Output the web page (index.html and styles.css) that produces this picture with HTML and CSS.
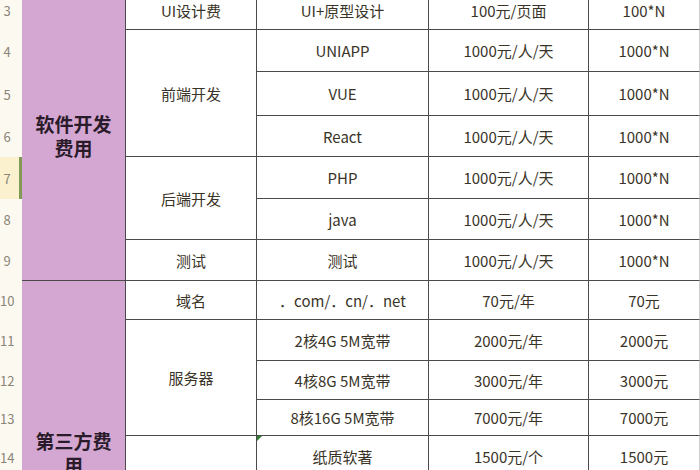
FILE: index.html
```html
<!DOCTYPE html>
<html lang="zh-CN">
<head>
<meta charset="utf-8">
<title>费用表</title>
<link rel="stylesheet" href="styles.css">
</head>
<body>
<div class="sheet">
  <!-- row 3 -->
  <div class="rh"><span>3</span></div>
  <div class="cat span7">软件开发<br>费用</div>
  <div class="cell c2">UI设计费</div>
  <div class="cell c3">UI+原型设计</div>
  <div class="cell c4">100元/页面</div>
  <div class="cell c5">100*N</div>
  <!-- row 4 -->
  <div class="rh"><span>4</span></div>
  <div class="cell c2 span3">前端开发</div>
  <div class="cell c3">UNIAPP</div>
  <div class="cell c4">1000元/人/天</div>
  <div class="cell c5">1000*N</div>
  <!-- row 5 -->
  <div class="rh"><span>5</span></div>
  <div class="cell c3">VUE</div>
  <div class="cell c4">1000元/人/天</div>
  <div class="cell c5">1000*N</div>
  <!-- row 6 -->
  <div class="rh"><span>6</span></div>
  <div class="cell c3">React</div>
  <div class="cell c4">1000元/人/天</div>
  <div class="cell c5">1000*N</div>
  <!-- row 7 -->
  <div class="rh sel"><span>7</span></div>
  <div class="cell c2 span2">后端开发</div>
  <div class="cell c3">PHP</div>
  <div class="cell c4">1000元/人/天</div>
  <div class="cell c5">1000*N</div>
  <!-- row 8 -->
  <div class="rh"><span>8</span></div>
  <div class="cell c3">java</div>
  <div class="cell c4">1000元/人/天</div>
  <div class="cell c5">1000*N</div>
  <!-- row 9 -->
  <div class="rh"><span>9</span></div>
  <div class="cell c2">测试</div>
  <div class="cell c3">测试</div>
  <div class="cell c4">1000元/人/天</div>
  <div class="cell c5">1000*N</div>
  <!-- row 10 -->
  <div class="rh"><span>10</span></div>
  <div class="cat span8">第三方费<br>用</div>
  <div class="cell c2">域名</div>
  <div class="cell c3">．com/．cn/．net</div>
  <div class="cell c4">70元/年</div>
  <div class="cell c5">70元</div>
  <!-- row 11 -->
  <div class="rh"><span>11</span></div>
  <div class="cell c2 span3">服务器</div>
  <div class="cell c3">2核4G 5M宽带</div>
  <div class="cell c4">2000元/年</div>
  <div class="cell c5">2000元</div>
  <!-- row 12 -->
  <div class="rh"><span>12</span></div>
  <div class="cell c3">4核8G 5M宽带</div>
  <div class="cell c4">3000元/年</div>
  <div class="cell c5">3000元</div>
  <!-- row 13 -->
  <div class="rh"><span>13</span></div>
  <div class="cell c3">8核16G 5M宽带</div>
  <div class="cell c4">7000元/年</div>
  <div class="cell c5">7000元</div>
  <!-- row 14 -->
  <div class="rh"><span>14</span></div>
  <div class="cell c2 span2">软著</div>
  <div class="cell c3 flag">纸质软著</div>
  <div class="cell c4">1500元/个</div>
  <div class="cell c5">1500元</div>
  <!-- row 15 -->
  <div class="rh"><span>15</span></div>
  <div class="cell c3"></div>
  <div class="cell c4"></div>
  <div class="cell c5"></div>
  <!-- row 16 -->
  <div class="rh"><span>16</span></div>
  <div class="cell c2"></div>
  <div class="cell c3"></div>
  <div class="cell c4"></div>
  <div class="cell c5"></div>
  <!-- row 17 -->
  <div class="rh"><span>17</span></div>
  <div class="cell c2"></div>
  <div class="cell c3"></div>
  <div class="cell c4"></div>
  <div class="cell c5"></div>
</div>
</body>
</html>
```
FILE: styles.css
```css
html, body {
  margin: 0;
  padding: 0;
  background: #ffffff;
}
body {
  width: 700px;
  height: 470px;
  overflow: hidden;
  font-family: "Noto Sans CJK SC", "Noto Sans", sans-serif;
}
.sheet {
  margin-top: -9px;
  display: grid;
  grid-template-columns: 22px 104px 131px 172px 160px 1fr;
  grid-template-rows: 39px 42px 44px 41px 42px 41px 41px 39px 41px 39px 36px 42px 42px 42px 64px;
}
.rh {
  grid-column: 1;
  background: #fcf9f0;
  color: #8a8578;
  font-size: 13px;
  display: flex;
  align-items: center;
  box-sizing: border-box;
  border-right: 3px solid transparent;
}
.rh span {
  width: 14px;
  text-align: center;
}
.rh.sel {
  background: #fbf1cf;
  border-right-color: #7f9a52;
}
.cat {
  grid-column: 2;
  background: #d4a6d2;
  color: #2a1b2a;
  font-weight: bold;
  font-size: 19px;
  line-height: 24px;
  display: flex;
  align-items: center;
  justify-content: center;
  text-align: center;
  box-sizing: border-box;
  border-right: 1px solid #4a4a4a;
  border-bottom: 1px solid #4a4a4a;
}
.span8 { grid-row: span 8; }
.span7 { grid-row: span 7; }
.span3 { grid-row: span 3; }
.span2 { grid-row: span 2; }
.cell {
  display: flex;
  align-items: center;
  justify-content: center;
  font-size: 15px;
  color: #3a3428;
  box-sizing: border-box;
  border-right: 1px solid #4a4a4a;
  border-bottom: 1px solid #4a4a4a;
  white-space: nowrap;
}
.c2 { grid-column: 3; }
.c3 { grid-column: 4; }
.c4 { grid-column: 5; }
.c5 { grid-column: 6; border-right-color: #cfcfcf; }
.flag { position: relative; }
.flag::before {
  content: "";
  position: absolute;
  left: 0;
  top: 0;
  border-top: 5px solid #2f7d32;
  border-right: 5px solid transparent;
}
```
